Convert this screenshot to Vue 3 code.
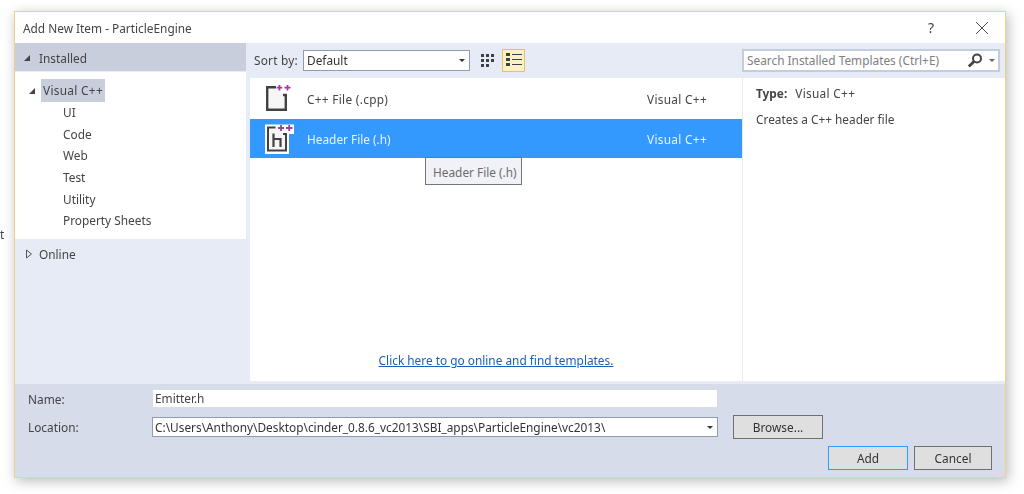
<script setup>
const treeItems = ['UI', 'Code', 'Web', 'Test', 'Utility', 'Property Sheets']
</script>

<template>
  <div class="page">
    <span class="stray">t</span>
    <div class="dialog">
      <header class="titlebar">
        <span class="title">Add New Item - ParticleEngine</span>
        <span class="help">?</span>
        <svg class="close" width="14" height="14" viewBox="0 0 14 14"><path d="M1 1l12 12M13 1L1 13" stroke="#4a4a4a" stroke-width="1" fill="none" /></svg>
      </header>
      <div class="main">
        <aside class="side">
          <div class="installed">
            <svg class="arrow" width="8" height="8" viewBox="0 0 8 8"><path d="M7 1v6H1z" fill="#444" /></svg>
            <span>Installed</span>
          </div>
          <div class="tree">
            <div class="tree-root">
              <svg class="arrow" width="8" height="8" viewBox="0 0 8 8"><path d="M7 1v6H1z" fill="#444" /></svg>
              <span class="selected cpp">Visual C++</span>
            </div>
            <div v-for="item in treeItems" :key="item" class="tree-item">{{ item }}</div>
          </div>
          <div class="online">
            <svg class="arrow" width="8" height="10" viewBox="0 0 8 10"><path d="M1.5 1l5 4-5 4z" fill="#e6ebf5" stroke="#555" /></svg>
            <span>Online</span>
          </div>
        </aside>
        <div class="content">
          <div class="toolbar">
            <span class="sort-label">Sort by:</span>
            <div class="select">
              <span>Default</span>
              <i class="caret"></i>
            </div>
            <svg class="grid-icon" width="14" height="14" viewBox="0 0 14 14" fill="#3f3f46">
              <rect x="0" y="0" width="3" height="3" /><rect x="5" y="0" width="3" height="3" /><rect x="10" y="0" width="3" height="3" />
              <rect x="0" y="5" width="3" height="3" /><rect x="5" y="5" width="3" height="3" /><rect x="10" y="5" width="3" height="3" />
              <rect x="0" y="10" width="3" height="3" /><rect x="5" y="10" width="3" height="3" />
            </svg>
            <div class="list-btn">
              <svg width="16" height="14" viewBox="0 0 16 14" fill="#3f3f46">
                <rect x="0" y="0" width="4" height="3" /><rect x="6" y="1" width="10" height="1" />
                <rect x="0" y="5" width="4" height="3" /><rect x="6" y="6" width="10" height="1" />
                <rect x="0" y="10" width="4" height="3" /><rect x="6" y="11" width="10" height="1" />
              </svg>
            </div>
            <div class="search">
              <span class="search-text">Search Installed Templates (Ctrl+E)</span>
              <svg width="16" height="15" viewBox="0 0 16 15"><circle cx="10" cy="5.500" r="4" fill="none" stroke="#444" stroke-width="2" /><path d="M7 8.500L1.800 13.600" stroke="#444" stroke-width="2.800" /></svg>
              <i class="caret search-caret"></i>
            </div>
          </div>
          <div class="body">
            <section class="list">
              <div class="row">
                <svg class="file-icon" width="30" height="30" viewBox="0 0 30 30">
                  <path d="M11 3.200H2.200v22.600h18.600V11H18" fill="#f6f6f6" stroke="#424242" stroke-width="2.400" />
                  <path d="M11.700 3.700h5.500M14.450 1v5.500M19.500 3.700h6M22.500 1v5.500" stroke="#a33ea1" stroke-width="1.800" />
                </svg>
                <span class="row-name cpp">C++ File (.cpp)</span>
                <span class="row-type cpp">Visual C++</span>
              </div>
              <div class="row active">
                <svg class="file-icon" width="30" height="32" viewBox="0 0 30 32">
                  <path d="M0 1.500h29v9.500h-5v20H0z" fill="#fff" />
                  <path d="M10.500 4.500H3v23h18V11h-3" fill="#f6f6f6" stroke="#424242" stroke-width="2" />
                  <path d="M8.500 10.500v13.500M8.500 16h7v8" fill="none" stroke="#424242" stroke-width="2.200" />
                  <path d="M13 5h6M16 2v6M21 5h6.500M24.200 2v6" stroke="#a33ea1" stroke-width="1.800" />
                </svg>
                <span class="row-name">Header File (.h)</span>
                <span class="row-type cpp">Visual C++</span>
              </div>
              <div class="tooltip">Header File (.h)</div>
              <a class="online-link">Click here to go online and find templates.</a>
            </section>
            <section class="detail">
              <p class="type-line"><b>Type:</b><span class="cpp">Visual C++</span></p>
              <p class="desc">Creates a C++ header file</p>
            </section>
          </div>
        </div>
      </div>
      <footer class="footer">
        <div class="form-row name-row">
          <label>Name:</label>
          <div class="name-input">Emitter.h</div>
        </div>
        <div class="form-row location-row">
          <label>Location:</label>
          <div class="location-input">
            <span>C:\Users\Anthony\Desktop\cinder_0.8.6_vc2013\SBI_apps\ParticleEngine\vc2013\</span>
            <i class="caret"></i>
          </div>
          <button class="btn browse">Browse...</button>
        </div>
        <div class="actions">
          <button class="btn add">Add</button>
          <button class="btn cancel">Cancel</button>
        </div>
      </footer>
    </div>
  </div>
</template>

<style>
html, body { margin: 0; background: #fff; }
</style>

<style scoped>
.page {
  position: relative;
  width: 1024px;
  height: 494px;
  box-sizing: border-box;
  padding: 11px 0 0 14px;
  overflow: hidden;
  font-family: "Noto Sans", "Open Sans", sans-serif;
  font-size: 11.85px;
  color: #444;
  filter: blur(0.3px);
}
.cpp { letter-spacing: .3px; }
.stray { position: absolute; left: 0; top: 226px; }
.dialog {
  width: 992px;
  height: 467px;
  box-sizing: border-box;
  border: 1px solid #efd18a;
  background: #fff;
  display: flex;
  flex-direction: column;
  box-shadow: 2px 3px 12px rgba(0, 0, 0, .28);
}
.titlebar {
  height: 31px;
  flex: none;
  display: flex;
  align-items: center;
  padding-left: 8px;
}
.title { flex: 1; }
.help { width: 14px; font-size: 14px; margin-right: 33px; }
.close { margin-right: 16px; }
.main { flex: 1; display: flex; background: #e6ebf5; min-height: 0; }
.side { width: 231px; flex: none; }
.installed {
  height: 28px;
  padding-top: 2px;
  box-sizing: border-box;
  background: #c9cedc;
  display: flex;
  align-items: center;
  padding-left: 8px;
  gap: 8px;
}
.arrow { flex: none; }
.tree { background: #fff; height: 167px; margin-top: 1px; padding-top: 8px; box-sizing: border-box; }
.tree-root { display: flex; align-items: center; height: 23px; margin-top: -1px; padding-left: 13px; gap: 5px; }
.selected { background: #c9cedc; line-height: 23px; padding: 0 2px; width: 60px; white-space: nowrap; }
.tree-item { height: 21.7px; line-height: 21px; padding-left: 48px; }
.online { display: flex; align-items: center; height: 30px; padding-left: 10px; gap: 6px; }
.content { flex: 1; min-width: 0; display: flex; flex-direction: column; }
.toolbar { height: 35px; box-sizing: border-box; padding: 0 0 1px 8px; flex: none; display: flex; align-items: center; }
.sort-label { width: 49px; flex: none; letter-spacing: .2px; }
.select {
  width: 167px;
  height: 21px;
  box-sizing: border-box;
  border: 1px solid #8e9bb0;
  background: #fff;
  display: flex;
  align-items: center;
  padding: 0 4px 0 3px;
  justify-content: space-between;
  color: #333;
}
.caret { display: block; border: 3px solid transparent; border-top: 3px solid #333; border-bottom: 0; width: 0; height: 0; }
.grid-icon { margin-left: 11px; margin-top: 1px; }
.list-btn {
  width: 23px;
  height: 23px;
  box-sizing: border-box;
  margin-left: 7px;
  background: #fdf0c4;
  border: 1px solid #e5c365;
  display: flex;
  align-items: center;
  justify-content: center;
}
.search {
  width: 258px;
  height: 23px;
  box-sizing: border-box;
  margin-left: 217px;
  border: 2px solid #c5ccdc;
  background: #fff;
  display: flex;
  align-items: center;
  padding-left: 3px;
}
.search-text { flex: 1; color: #808080; white-space: nowrap; }
.search-caret { margin: 0 3px 0 6px; border-top-color: #666; }
.body { flex: 1; display: flex; min-height: 0; padding-bottom: 3px; }
.list { width: 492px; flex: none; margin-left: 4px; background: #fff; position: relative; display: flex; flex-direction: column; }
.row { height: 40px; display: flex; align-items: center; flex: none; padding: 1px 0 0 15px; box-sizing: border-box; }
.row.active { background: #3399ff; color: #e6f2ff; height: 39px; margin-top: 1px; }
.file-icon { flex: none; width: 30px; }
.row-name { margin-left: 12px; width: 340px; }
.row-type { white-space: nowrap; }
.tooltip {
  position: absolute;
  left: 175px;
  top: 79px;
  width: 97px;
  height: 28px;
  box-sizing: border-box;
  border: 1px solid #767676;
  background: #f1f2f7;
  color: #6d6d6d;
  display: flex;
  align-items: center;
  padding: 1px 0 0 7px;
  white-space: nowrap;
}
.online-link {
  margin-top: auto;
  margin-bottom: 13px;
  text-align: center;
  color: #1b5fbd;
  text-decoration: underline;
}
.detail { flex: 1; margin-left: 1px; background: #fff; padding: 7px 13px; }
.detail p { margin: 0; }
.type-line { display: flex; gap: 8px; }
.type-line b { font-weight: 700; }
.desc { margin-top: 10px !important; }
.footer {
  height: 93px;
  flex: none;
  background: #d6dce9;
  padding: 6px 0 0 13px;
  box-sizing: border-box;
}
.form-row { display: flex; align-items: center; }
.form-row label { width: 125px; flex: none; }
.name-input {
  width: 562px;
  height: 17px;
  line-height: 17px;
  background: #fff;
  padding-left: 2px;
  color: #444;
}
.location-row { margin-top: 8px; height: 24px; }
.location-input {
  width: 566px;
  height: 20px;
  box-sizing: border-box;
  border: 1px solid #8e9bb0;
  background: #fff;
  margin-left: -1px;
  display: flex;
  align-items: center;
  justify-content: space-between;
  padding: 0 4px 0 2px;
  color: #333;
  white-space: nowrap;
}
.btn {
  font: inherit;
  color: #333;
  height: 24px;
  box-sizing: border-box;
  background: #dfdfdf;
  border: 1px solid #707070;
  padding: 0;
}
.browse { width: 90px; margin-left: 15px; }
.actions { display: flex; justify-content: flex-end; gap: 6px; padding-right: 13px; margin-top: 7px; }
.add { width: 80px; border-color: #3399ff; }
.cancel { width: 78px; }
</style>
